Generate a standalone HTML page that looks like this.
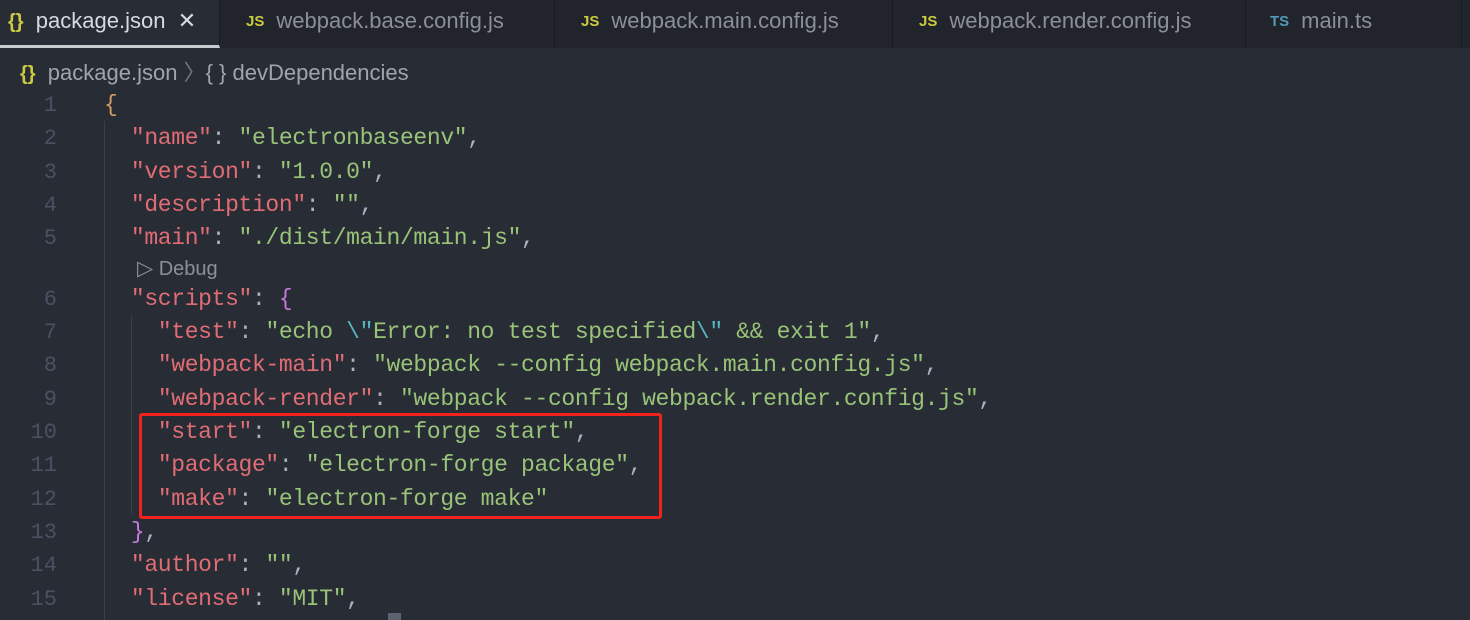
<!DOCTYPE html>
<html><head><meta charset="utf-8"><style>
body{margin:0;width:1470px;height:620px;background:#282c34;overflow:hidden;position:relative;font-family:"Liberation Sans",sans-serif}
.tabs{position:absolute;left:0;top:0;width:1470px;height:48px;background:#21252b}
.tab{position:absolute;top:0;height:48px;line-height:42px;font-size:22px;color:#8b8f96;white-space:nowrap;border-right:1px solid #181a1f;box-sizing:border-box}
.tab.act{background:#282c34;color:#d7dae0;border-bottom:3px solid #c8cbd0}
.ic{font-weight:bold;font-size:15px;margin-right:12px;vertical-align:2px}
.js{color:#cbcb41}.ts{color:#519aba}.br{color:#cbcb41;font-size:20px;font-weight:bold}
.bc{position:absolute;left:20px;top:55px;font-size:22px;color:#a0a5ad;white-space:nowrap}
.ln{position:absolute;left:0;width:57px;text-align:right;font-family:"Liberation Mono",monospace;font-size:22px;color:#495162}
.code{position:absolute;font-family:"Liberation Mono",monospace;font-size:23px;letter-spacing:-0.35px;white-space:pre;color:#abb2bf}
.k{color:#e06c75}.s{color:#98c379}.o{color:#d19a66}.p{color:#c678dd}.e{color:#56b6c2}
.g{position:absolute;width:1px;background:#3b4048}
</style></head><body>
<div class="tabs">
<div class="tab act" style="left:0;width:220px;padding-left:8px"><span class="br">{}</span>&nbsp; package.json &nbsp;<span style="font-size:22px">✕</span></div>
<div class="tab" style="left:220px;width:335px;padding-left:26px"><span class="ic js">JS</span>webpack.base.config.js</div>
<div class="tab" style="left:555px;width:338px;padding-left:26px"><span class="ic js">JS</span>webpack.main.config.js</div>
<div class="tab" style="left:893px;width:353px;padding-left:26px"><span class="ic js">JS</span>webpack.render.config.js</div>
<div class="tab" style="left:1246px;width:216px;padding-left:24px"><span class="ic ts">TS</span>main.ts</div>
</div>
<div class="bc"><span class="br">{}</span>&nbsp;&nbsp;package.json <span style="color:#777">〉</span>{ } devDependencies</div>
<div class="g" style="left:104px;top:121px;height:499px"></div>
<div class="g" style="left:131px;top:315px;height:200px"></div>
<div style="position:absolute;left:137px;top:256px;font-size:20px;color:#8b9099"><span style="font-size:21px">▷</span> Debug</div>
<div class="ln" style="top:93px">1</div><div class="code" style="left:104px;top:92px"><span class="o">{</span></div>
<div class="ln" style="top:126px">2</div><div class="code" style="left:104px;top:125px">  <span class="k">"name"</span>: <span class="s">"electronbaseenv"</span>,</div>
<div class="ln" style="top:160px">3</div><div class="code" style="left:104px;top:159px">  <span class="k">"version"</span>: <span class="s">"1.0.0"</span>,</div>
<div class="ln" style="top:193px">4</div><div class="code" style="left:104px;top:192px">  <span class="k">"description"</span>: <span class="s">""</span>,</div>
<div class="ln" style="top:226px">5</div><div class="code" style="left:104px;top:225px">  <span class="k">"main"</span>: <span class="s">"./dist/main/main.js"</span>,</div>
<div class="ln" style="top:287px">6</div><div class="code" style="left:104px;top:286px">  <span class="k">"scripts"</span>: <span class="p">{</span></div>
<div class="ln" style="top:320px">7</div><div class="code" style="left:104px;top:319px">    <span class="k">"test"</span>: <span class="s">"echo <span class="e">\"</span>Error: no test specified<span class="e">\"</span> &amp;&amp; exit 1"</span>,</div>
<div class="ln" style="top:353px">8</div><div class="code" style="left:104px;top:352px">    <span class="k">"webpack-main"</span>: <span class="s">"webpack --config webpack.main.config.js"</span>,</div>
<div class="ln" style="top:387px">9</div><div class="code" style="left:104px;top:386px">    <span class="k">"webpack-render"</span>: <span class="s">"webpack --config webpack.render.config.js"</span>,</div>
<div class="ln" style="top:420px">10</div><div class="code" style="left:104px;top:419px">    <span class="k">"start"</span>: <span class="s">"electron-forge start"</span>,</div>
<div class="ln" style="top:453px">11</div><div class="code" style="left:104px;top:452px">    <span class="k">"package"</span>: <span class="s">"electron-forge package"</span>,</div>
<div class="ln" style="top:487px">12</div><div class="code" style="left:104px;top:486px">    <span class="k">"make"</span>: <span class="s">"electron-forge make"</span></div>
<div class="ln" style="top:520px">13</div><div class="code" style="left:104px;top:519px">  <span class="p">}</span>,</div>
<div class="ln" style="top:553px">14</div><div class="code" style="left:104px;top:552px">  <span class="k">"author"</span>: <span class="s">""</span>,</div>
<div class="ln" style="top:587px">15</div><div class="code" style="left:104px;top:586px">  <span class="k">"license"</span>: <span class="s">"MIT"</span>,</div>
<div style="position:absolute;left:139px;top:413px;width:517px;height:100px;border:3px solid #f2231c;border-radius:3px"></div>
<div style="position:absolute;left:388px;top:613px;width:13px;height:7px;background:#5c6370"></div>
</body></html>
